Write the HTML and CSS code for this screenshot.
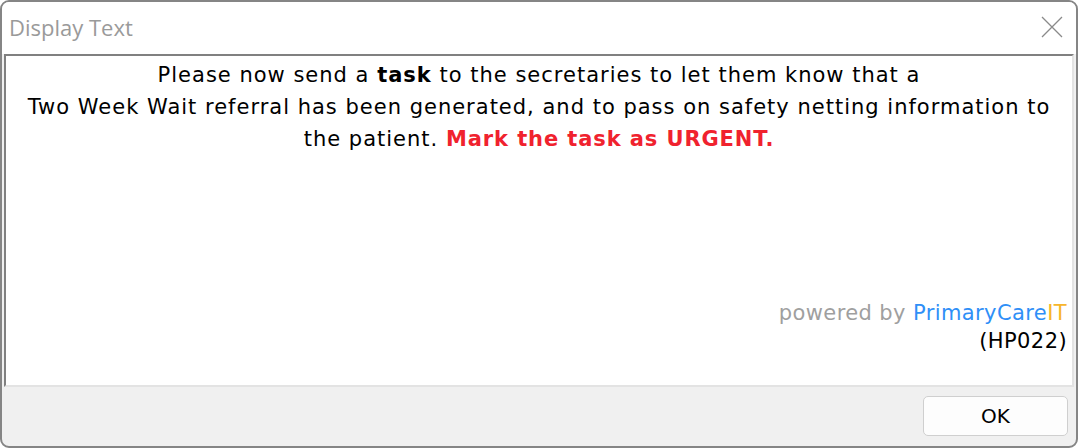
FILE: index.html
```html
<!DOCTYPE html>
<html>

<head>
    <meta charset="UTF-8">
    <title>Display Text</title>
    <link rel="stylesheet" href="styles.css">
</head>

<body>
    <div id="window">
        <div class="titlebar">
            <div class="title">Display Text</div>
            <div class="close">
                <svg width="22" height="22" viewBox="0 0 22 22">
                    <path d="M1 1 L21 21 M21 1 L1 21" stroke="#8a8a8a" stroke-width="1.3" fill="none"/>
                </svg>
            </div>
        </div>
        <div class="panel">
            <div class="message">
                Please now send a <b>task</b> to the secretaries to let them know that a<br>
                Two Week Wait referral has been generated, and to pass on safety netting information to<br>
                the patient. <span class="urgent">Mark the task as URGENT.</span>
            </div>
            <div class="credits">
                <div><span class="powered">powered by</span> <span class="brand">PrimaryCare</span><span class="brand-it">IT</span></div>
                <div>(HP022)</div>
            </div>
        </div>
        <div class="footer">
            <button class="ok">OK</button>
        </div>
    </div>
</body>

</html>
```

FILE: styles.css
```css
html, body {
    margin: 0;
    padding: 0;
    background: #fff;
}

#window {
    box-sizing: border-box;
    width: 1078px;
    height: 448px;
    border: 2px solid #858585;
    border-radius: 9px;
    display: flex;
    flex-direction: column;
    overflow: hidden;
    background: #f0f0f0;
}

.titlebar {
    height: 52px;
    background: #fff;
    display: flex;
    align-items: center;
    justify-content: space-between;
    padding-left: 7px;
    padding-right: 13px;
}

.title {
    font-family: "Open Sans", "Noto Sans", sans-serif;
    font-size: 22px;
    color: #9a9a9a;
    margin-top: -2px;
}

.close {
    display: flex;
    margin-top: -3px;
}

.panel {
    flex: 1;
    margin: 0 2px 0 2px;
    background: #fff;
    border-top: 2px solid #808080;
    border-left: 2px solid #808080;
    border-right: 2px solid #e3e3e3;
    border-bottom: 2px solid #e3e3e3;
    display: flex;
    flex-direction: column;
    justify-content: space-between;
    font-family: "DejaVu Sans", sans-serif;
    font-size: 21px;
    letter-spacing: 1px;
    color: #000;
    white-space: nowrap;
}

.message {
    text-align: center;
    line-height: 32px;
    padding-top: 3px;
}

.urgent {
    color: #f0222e;
    font-weight: bold;
    letter-spacing: 0.9px;
}

.credits {
    text-align: right;
    line-height: 28px;
    padding-right: 5px;
    padding-bottom: 30px;
    letter-spacing: 0.4px;
}

.powered {
    color: #9f9f9f;
}

.brand {
    color: #2f8ff7;
}

.brand-it {
    color: #f7b52b;
}

.footer {
    height: 59px;
    display: flex;
    justify-content: flex-end;
    align-items: flex-start;
    padding: 9px 8px 0 0;
    box-sizing: border-box;
}

.ok {
    width: 145px;
    height: 40px;
    background: #fdfdfd;
    border: 1px solid #cfcfcf;
    border-radius: 5px;
    font-family: "DejaVu Sans", sans-serif;
    font-size: 20px;
    color: #000;
}
```
